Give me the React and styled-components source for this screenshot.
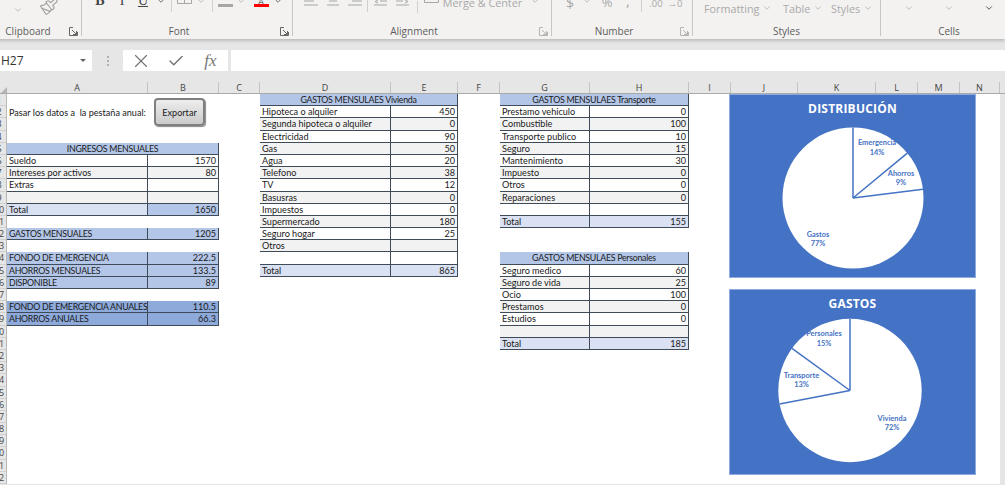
import React from 'react';
import styled, { createGlobalStyle } from 'styled-components';
import { Check, ChevronDown, Paintbrush, X } from 'lucide-react';

const GlobalStyle = createGlobalStyle`
  html, body { margin: 0; padding: 0; background: #fff; }
  #root { width: 1005px; height: 485px; overflow: hidden; }
`;

const Page = styled.div`
  width: 1005px;
  height: 485px;
  overflow: hidden;
  background: #e6e6e6;
  font-family: 'Lato', 'Liberation Sans', sans-serif;
`;

/* ---------- ribbon ---------- */
const Ribbon = styled.div`
  position: relative;
  z-index: 1;
  display: flex;
  height: 39px;
  margin-left: -9px;
  background: #f3f2f1;
  box-shadow: 0 2px 3px rgba(0, 0, 0, 0.18);
`;

const Group = styled.div`
  flex: 0 0 ${(p) => p.$w}px;
  height: 36px;
  display: flex;
  flex-direction: column;
  border-right: ${(p) => (p.$last ? 'none' : '1px solid #c8c6c4')};
  box-sizing: border-box;
`;

const ToolRow = styled.div`
  height: 24px;
  padding-left: ${(p) => p.$pad}px;
  display: flex;
  align-items: flex-start;
  overflow: hidden;
`;

const Tool = styled.div`
  flex: 0 0 ${(p) => p.$w}px;
  height: ${(p) => p.$h || 16}px;
  margin-top: ${(p) => p.$top || 0}px;
  display: flex;
  align-items: center;
  justify-content: center;
  color: ${(p) => p.$color || '#a6a6a6'};
`;

const Letter = styled.span`
  font-family: 'Liberation Serif', serif;
  font-size: 14px;
  font-weight: ${(p) => (p.$bold ? 700 : 400)};
  text-decoration: ${(p) => (p.$under ? 'underline' : 'none')};
  color: #444;
  line-height: 14px;
`;

const ToolSep = styled.div`
  width: 1px;
  height: 12px;
  background: #d2d0ce;
`;

const FadedText = styled.span`
  font-family: 'Open Sans', sans-serif;
  font-size: ${(p) => p.$size || 10.8}px;
  color: #a9a9a9;
  white-space: nowrap;
`;

const StyleButton = styled.div`
  flex: 0 0 ${(p) => p.$w}px;
  height: 16px;
  display: flex;
  align-items: center;
  gap: 3px;
`;

const LabelRow = styled.div`
  height: 12px;
  display: flex;
  align-items: center;
`;

const GroupLabel = styled.div`
  flex: 1;
  text-align: center;
  font-family: 'Open Sans', sans-serif;
  font-size: 10px;
  line-height: 12px;
  color: #5c5c5c;
  padding-top: 2px;
`;

const LauncherSlot = styled.div`
  flex: 0 0 16px;
  display: flex;
  justify-content: center;
  padding-top: 2px;
`;

const Launcher = ({ dark }) => (
  <svg width="9" height="9" viewBox="0 0 9 9" fill="none" stroke={dark ? '#666' : '#b5b5b5'} strokeWidth="1">
    <path d="M4 .5H.5V8.5H8.5V5" />
    <path d="M3 3l4.5 4.5M7.5 4v3.5H4" />
  </svg>
);

const Chev = ({ color }) => <ChevronDown size={10} strokeWidth={2} color={color || '#b3b3b3'} />;

const LinesIcon = ({ kind }) => {
  const rows = {
    left: ['M0 0H14', 'M0 4H10', 'M0 8H14'],
    center: ['M1 0H13', 'M3 4H11', 'M1 8H13'],
    right: ['M0 0H14', 'M4 4H14', 'M0 8H14'],
    outdent: ['M0 1H13', 'M6 4H13', 'M0 8H13', 'M4 3L1 4.5L4 6'],
    indent: ['M0 1H13', 'M0 4H7', 'M0 8H13', 'M9 3L12 4.5L9 6'],
  };
  return (
    <svg width="14" height="9" viewBox="0 0 14 9" fill="none" stroke="#a6a6a6" strokeWidth="1">
      {rows[kind].map((d) => (
        <path key={d} d={d} />
      ))}
    </svg>
  );
};

const ColorBar = styled.div`
  width: ${(p) => p.$w}px;
  height: 3px;
  background: ${(p) => p.$color};
`;

const ColorTool = styled(Tool)`
  flex-direction: column;
  justify-content: flex-end;
  height: 7px;
  gap: 0;
`;

const ClippedA = styled.span`
  font-family: 'Liberation Sans', sans-serif;
  font-size: 9px;
  line-height: 4px;
  height: 4px;
  overflow: hidden;
  color: ${(p) => p.$color};
`;

function RibbonBar() {
  return (
    <Ribbon>
      <Group $w={91}>
        <ToolRow $pad={19}>
          <Tool $w={16} $top={2}><Chev /></Tool>
          <Tool $w={44} $top={-5} $h={22}>
            <Paintbrush size={19} strokeWidth={1.4} color="#a0a0a0" style={{ transform: 'rotate(6deg)' }} />
          </Tool>
        </ToolRow>
        <LabelRow>
          <GroupLabel>Clipboard</GroupLabel>
          <LauncherSlot><Launcher dark /></LauncherSlot>
        </LabelRow>
      </Group>
      <Group $w={211}>
        <ToolRow $pad={7}>
          <Tool $w={22} $top={-6} $h={14}><Letter $bold>B</Letter></Tool>
          <Tool $w={22} $top={-6} $h={14}><Letter>I</Letter></Tool>
          <Tool $w={20} $top={-6} $h={14}><Letter $under>U</Letter></Tool>
          <Tool $w={16} $top={-3} $h={8}><Chev color="#555" /></Tool>
          <Tool $w={4} $h={12}><ToolSep /></Tool>
          <Tool $w={22} $top={-4} $h={12}>
            <svg width="15" height="11" viewBox="0 0 15 11" fill="none" stroke="#a6a6a6">
              <path d="M.5 -1V6.5H14.5V-1M7.5 -1V6.5" />
            </svg>
          </Tool>
          <Tool $w={12} $top={-3} $h={8}><Chev /></Tool>
          <Tool $w={10} $h={12}><ToolSep /></Tool>
          <ColorTool $w={16}><ColorBar $w={15} $color="#a6a6a6" /></ColorTool>
          <Tool $w={16} $top={-3} $h={8}><Chev /></Tool>
          <ColorTool $w={24}>
            <ClippedA $color="#444">A</ClippedA>
            <ColorBar $w={15} $color="#ff0000" />
          </ColorTool>
          <Tool $w={10} $top={-3} $h={8}><Chev color="#555" /></Tool>
        </ToolRow>
        <LabelRow>
          <GroupLabel>Font</GroupLabel>
          <LauncherSlot><Launcher dark /></LauncherSlot>
        </LabelRow>
      </Group>
      <Group $w={259}>
        <ToolRow $pad={7}>
          <Tool $w={22} $top={-3} $h={9}><LinesIcon kind="left" /></Tool>
          <Tool $w={22} $top={-3} $h={9}><LinesIcon kind="center" /></Tool>
          <Tool $w={22} $top={-3} $h={9}><LinesIcon kind="right" /></Tool>
          <Tool $w={2} $h={12}><ToolSep /></Tool>
          <Tool $w={26} $top={-3} $h={9}><LinesIcon kind="outdent" /></Tool>
          <Tool $w={18} $top={-3} $h={9}><LinesIcon kind="indent" /></Tool>
          <Tool $w={10} $h={14}><ToolSep /></Tool>
          <Tool $w={18} $top={-4} $h={11}>
            <svg width="15" height="11" viewBox="0 0 15 11" fill="none" stroke="#a6a6a6">
              <path d="M.5 -1V6.5H14.5V-1M.5 3.5H14.5" />
            </svg>
          </Tool>
          <Tool $w={85} $top={-6} $h={16}><FadedText>Merge &amp; Center</FadedText></Tool>
          <Tool $w={20} $top={-3} $h={8}><Chev /></Tool>
        </ToolRow>
        <LabelRow>
          <GroupLabel>Alignment</GroupLabel>
          <LauncherSlot><Launcher /></LauncherSlot>
        </LabelRow>
      </Group>
      <Group $w={141}>
        <ToolRow $pad={7}>
          <Tool $w={22} $top={-6} $h={16}><FadedText $size={14}>$</FadedText></Tool>
          <Tool $w={12} $top={-3} $h={8}><Chev /></Tool>
          <Tool $w={28} $top={-6} $h={16}><FadedText $size={13}>%</FadedText></Tool>
          <Tool $w={14} $top={-8} $h={16}><FadedText $size={15}>,</FadedText></Tool>
          <Tool $w={12} $h={12}><ToolSep /></Tool>
          <Tool $w={18} $top={-5} $h={16}><FadedText $size={9.5}>.00</FadedText></Tool>
          <Tool $w={20} $top={-5} $h={16}><FadedText $size={9.5}>→0</FadedText></Tool>
        </ToolRow>
        <LabelRow>
          <GroupLabel>Number</GroupLabel>
          <LauncherSlot><Launcher /></LauncherSlot>
        </LabelRow>
      </Group>
      <Group $w={187}>
        <ToolRow $pad={11}>
          <StyleButton $w={79}><FadedText>Formatting</FadedText><Chev /></StyleButton>
          <StyleButton $w={48}><FadedText>Table</FadedText><Chev /></StyleButton>
          <StyleButton $w={49}><FadedText>Styles</FadedText><Chev /></StyleButton>
        </ToolRow>
        <LabelRow><GroupLabel>Styles</GroupLabel></LabelRow>
      </Group>
      <Group $w={136} $last>
        <ToolRow $pad={8}>
          <Tool $w={40}><Chev /></Tool>
          <Tool $w={40}><Chev /></Tool>
          <Tool $w={40}><Chev color="#333" /></Tool>
        </ToolRow>
        <LabelRow><GroupLabel>Cells</GroupLabel></LabelRow>
      </Group>
    </Ribbon>
  );
}

/* ---------- formula bar ---------- */
const FormulaBar = styled.div`
  display: flex;
  height: 21px;
  padding: 11px 0;
  background: #e6e6e6;
`;

const NameBox = styled.div`
  flex: 0 0 92px;
  box-sizing: border-box;
  display: flex;
  align-items: center;
  justify-content: space-between;
  padding: 0 6px 0 1px;
  background: #fff;
  font-family: 'Open Sans', sans-serif;
  font-size: 12px;
  color: #333;
`;

const Caret = styled.div`
  width: 0;
  height: 0;
  border: 3px solid transparent;
  border-top: 3px solid #666;
  margin-top: 3px;
`;

const Dots = styled.div`
  flex: 0 0 31px;
  display: flex;
  flex-direction: column;
  align-items: center;
  justify-content: center;
  gap: 2px;
  & > i {
    width: 2px;
    height: 2px;
    background: #b0b0b0;
  }
`;

const FxBox = styled.div`
  flex: 0 0 104px;
  display: flex;
  background: #fff;
  margin-right: 3px;
`;

const FxButton = styled.div`
  flex: 0 0 35px;
  display: flex;
  align-items: center;
  justify-content: center;
  color: #707070;
`;

const FxText = styled.span`
  font-family: 'Liberation Serif', serif;
  font-style: italic;
  font-size: 17px;
  color: #777;
`;

const FormulaInput = styled.div`
  flex: 1;
  background: #fff;
`;

/* ---------- column headers ---------- */
const COLUMNS = [
  ['A', 141], ['B', 71], ['C', 41], ['D', 131], ['E', 67], ['F', 42], ['G', 90],
  ['H', 99], ['I', 42], ['J', 67], ['K', 78], ['L', 42], ['M', 42], ['N', 40],
];

const ColumnBar = styled.div`
  display: flex;
  height: 12px;
  box-sizing: border-box;
  border-bottom: 1px solid #a9a9a9;
  background: #e6e6e6;
`;

const Corner = styled.div`
  flex: 0 0 7px;
  position: relative;
  overflow: hidden;
  &::after {
    content: '';
    position: absolute;
    right: 0;
    bottom: 0;
    border-left: 6px solid transparent;
    border-bottom: 6px solid #b5b5b5;
  }
`;

const ColumnHead = styled.div`
  flex: 0 0 ${(p) => p.$w}px;
  box-sizing: border-box;
  border-right: 1px solid #c4c4c4;
  text-align: center;
  font-family: 'Open Sans', sans-serif;
  font-size: 9px;
  line-height: 11px;
  color: #444;
`;

/* ---------- sheet ---------- */
const Body = styled.div`
  display: flex;
  height: 390px;
`;

const Gutter = styled.div`
  flex: 0 0 7px;
  display: grid;
  grid-auto-rows: 12.2px;
  overflow: hidden;
  box-sizing: border-box;
  border-right: 1px solid #b9b9b9;
`;

const RowNumber = styled.div`
  width: 14px;
  margin-left: -8px;
  text-align: center;
  font-family: 'Open Sans', sans-serif;
  font-size: 9px;
  line-height: 12px;
  color: #444;
  box-shadow: inset 0 -1px 0 #cfcfcf;
`;

const Sheet = styled.div`
  flex: 0 0 993px;
  display: grid;
  grid-template-columns: 141px 71px 41px 131px 67px 42px 90px 99px 40px 247px;
  grid-template-rows: repeat(32, 12.2px);
  background: #fff;
`;

const Note = styled.div`
  grid-column: 1;
  grid-row: 2;
  padding-left: 2px;
  font-size: 9.1px;
  line-height: 13px;
  white-space: pre;
  color: #1a1a1a;
`;

const ExportButton = styled.button`
  grid-column: 2;
  grid-row: 1 / span 3;
  justify-self: start;
  margin: 4px 0 0 6px;
  width: 51px;
  height: 28px;
  padding: 0;
  border: 2px solid #7f7f7f;
  border-radius: 4px;
  background: linear-gradient(#ededed, #cbcbcb);
  box-shadow: 1px 1px 1px #8a8a8a;
  font-family: inherit;
  font-size: 9.1px;
  color: #1a1a1a;
`;

const Table = styled.div`
  grid-column: ${(p) => p.$col} / span 2;
  grid-row: ${(p) => p.$row} / span ${(p) => p.$rows};
  display: grid;
  grid-template-columns: subgrid;
  grid-template-rows: subgrid;
  box-sizing: border-box;
  box-shadow: inset 1px 1px 0 #404b5a;
`;

const Cell = styled.div`
  grid-column: ${(p) => (p.$span ? '1 / span 2' : 'auto')};
  box-sizing: border-box;
  min-width: 0;
  padding: 0 2px;
  border-right: 1px solid #404b5a;
  border-bottom: 1px solid #404b5a;
  background: ${(p) => p.$bg};
  text-align: ${(p) => p.$align || 'left'};
  font-size: ${(p) => (p.$caps ? 8.8 : 9.1)}px;
  letter-spacing: ${(p) => (p.$caps ? '-0.28px' : 'normal')};
  line-height: 12px;
  white-space: nowrap;
  overflow: hidden;
  color: #1a1a1a;
`;

const FILL = {
  head: '#b4c6e7',
  total: '#d9e1f2',
  deep: '#8eaadb',
  white: '#ffffff',
  grey: '#f2f2f2',
};

const striped = (i) => (i % 2 === 0 ? FILL.white : FILL.grey);

function DataTable({ col, row, title, items, caps }) {
  const rows = items.length + (title ? 1 : 0);
  return (
    <Table $col={col} $row={row} $rows={rows}>
      {title && <Cell $span $caps $bg={FILL.head} $align="center">{title}</Cell>}
      {items.map(([label, value, fill, fillValue], i) => (
        <React.Fragment key={label + i}>
          <Cell $caps={caps} $bg={fill || striped(i)}>{label}</Cell>
          <Cell $bg={fillValue || fill || striped(i)} $align="right">{value}</Cell>
        </React.Fragment>
      ))}
    </Table>
  );
}

const VIVIENDA = [
  ['Hipoteca o alquiler', 450], ['Segunda hipoteca o alquiler', 0], ['Electricidad', 90],
  ['Gas', 50], ['Agua', 20], ['Telefono', 38], ['TV', 12], ['Basusras', 0], ['Impuestos', 0],
  ['Supermercado', 180], ['Seguro hogar', 25], ['Otros', ''], ['', ''], ['Total', 865, FILL.total],
];

const TRANSPORTE = [
  ['Prestamo vehiculo', 0], ['Combustible', 100], ['Transporte publico', 10], ['Seguro', 15],
  ['Mantenimiento', 30], ['Impuesto', 0], ['Otros', 0], ['Reparaciones', 0], ['', ''],
  ['Total', 155, FILL.total],
];

const PERSONALES = [
  ['Seguro medico', 60], ['Seguro de vida', 25], ['Ocio', 100], ['Prestamos', 0], ['Estudios', 0],
  ['', ''], ['Total', 185, FILL.total],
];

const INGRESOS = [
  ['Sueldo', 1570], ['Intereses por activos', 80], ['Extras', ''], ['', ''],
  ['Total', 1650, FILL.total, FILL.head],
];

/* ---------- charts ---------- */
const ChartCard = styled.div`
  grid-column: 10;
  grid-row: ${(p) => p.$row} / span ${(p) => p.$rows};
  height: ${(p) => p.$h}px;
  box-sizing: border-box;
  display: flex;
  flex-direction: column;
  background: #4472c4;
  border: 1px solid #8faadc;
  z-index: 1;
`;

const ChartTitle = styled.div`
  height: 27px;
  flex: none;
  text-align: center;
  font-family: 'Open Sans', sans-serif;
  font-size: 12px;
  font-weight: 700;
  letter-spacing: 0.2px;
  line-height: 27px;
  color: #fff;
`;

const PieSvg = styled.svg`
  display: block;
  flex: 1;
  width: 100%;
  min-height: 0;
`;

const PieLabel = styled.text`
  font-family: 'Lato', sans-serif;
  font-size: 7.4px;
  font-weight: 700;
  fill: #4472c4;
  text-anchor: middle;
`;

function Pie({ w, h, cx, cy, r, angles, labels }) {
  const point = (deg) => {
    const a = (deg * Math.PI) / 180;
    return [cx + r * Math.sin(a), cy - r * Math.cos(a)];
  };
  return (
    <PieSvg viewBox={`0 0 ${w} ${h}`}>
      <circle cx={cx} cy={cy} r={r} fill="#fff" />
      {angles.map((deg) => {
        const [x, y] = point(deg);
        return <line key={deg} x1={cx} y1={cy} x2={x} y2={y} stroke="#4472c4" strokeWidth="1.5" />;
      })}
      {labels.map(([name, pct, x, y]) => (
        <React.Fragment key={name}>
          <PieLabel x={x} y={y}>{name}</PieLabel>
          <PieLabel x={x} y={y + 9.5}>{pct}</PieLabel>
        </React.Fragment>
      ))}
    </PieSvg>
  );
}

export default function App() {
  const rowNumbers = Array.from({ length: 32 }, (_, i) => i + 1);
  return (
    <Page>
      <GlobalStyle />
      <RibbonBar />
      <FormulaBar>
        <NameBox>H27<Caret /></NameBox>
        <Dots><i /><i /><i /></Dots>
        <FxBox>
          <FxButton><X size={22} strokeWidth={1.2} /></FxButton>
          <FxButton><Check size={18} strokeWidth={1.8} /></FxButton>
          <FxButton><FxText>fx</FxText></FxButton>
        </FxBox>
        <FormulaInput />
      </FormulaBar>
      <ColumnBar>
        <Corner />
        {COLUMNS.map(([name, w]) => (
          <ColumnHead key={name} $w={w}>{name}</ColumnHead>
        ))}
      </ColumnBar>
      <Body>
        <Gutter>
          {rowNumbers.map((n) => (
            <RowNumber key={n}>{n}</RowNumber>
          ))}
        </Gutter>
        <Sheet>
          <Note>Pasar los datos a  la pestaña anual:</Note>
          <ExportButton>Exportar</ExportButton>
          <DataTable col={1} row={5} title="INGRESOS MENSUALES" items={INGRESOS} />
          <DataTable col={1} row={12} caps items={[['GASTOS MENSUALES', 1205, FILL.head]]} />
          <DataTable
            col={1}
            row={14}
            caps
            items={[
              ['FONDO DE EMERGENCIA', 222.5, FILL.head],
              ['AHORROS MENSUALES', 133.5, FILL.head],
              ['DISPONIBLE', 89, FILL.head],
            ]}
          />
          <DataTable
            col={1}
            row={18}
            caps
            items={[
              ['FONDO DE EMERGENCIA ANUALES', 110.5, FILL.deep],
              ['AHORROS ANUALES', 66.3, FILL.deep],
            ]}
          />
          <DataTable col={4} row={1} title="GASTOS MENSULAES Vivienda" items={VIVIENDA} />
          <DataTable col={7} row={1} title="GASTOS MENSULAES Transporte" items={TRANSPORTE} />
          <DataTable col={7} row={14} title="GASTOS MENSULAES Personales" items={PERSONALES} />
          <ChartCard $row={1} $rows={15} $h={184}>
            <ChartTitle>DISTRIBUCIÓN</ChartTitle>
            <Pie
              w={245}
              h={155}
              cx={123}
              cy={76}
              r={70.5}
              angles={[0, 50.4, 82.8]}
              labels={[
                ['Emergencia', '14%', 147, 23],
                ['Ahorros', '9%', 171, 53.5],
                ['Gastos', '77%', 88, 114.5],
              ]}
            />
          </ChartCard>
          <ChartCard $row={17} $rows={16} $h={186}>
            <ChartTitle>GASTOS</ChartTitle>
            <Pie
              w={245}
              h={157}
              cx={120}
              cy={73.5}
              r={71.7}
              angles={[0, 259.2, 306]}
              labels={[
                ['Personales', '15%', 94, 19],
                ['Transporte', '13%', 71.5, 60.5],
                ['Vivienda', '72%', 162, 103.5],
              ]}
            />
          </ChartCard>
        </Sheet>
      </Body>
    </Page>
  );
}
